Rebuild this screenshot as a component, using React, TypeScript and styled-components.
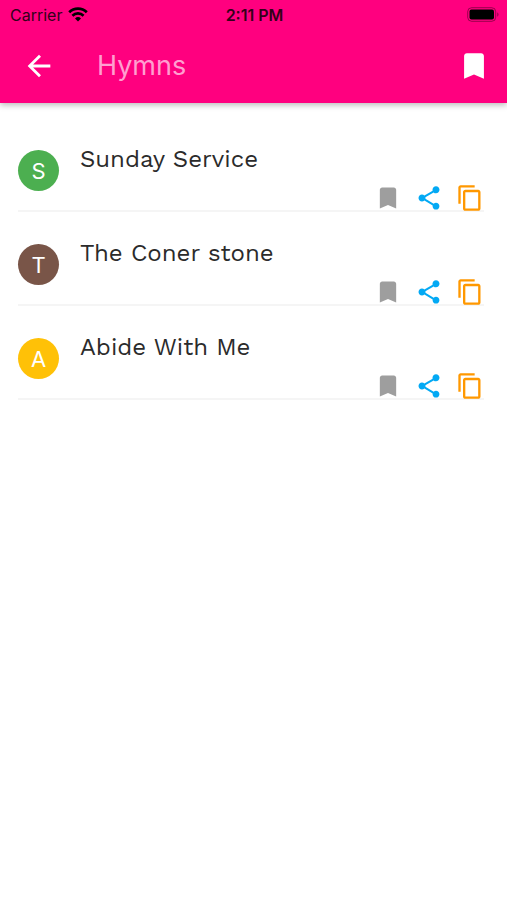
import React from "react";
import styled, { createGlobalStyle } from "styled-components";
import { MdArrowBack, MdBookmark, MdContentCopy, MdShare } from "react-icons/md";

const GlobalStyle = createGlobalStyle`
  *, *::before, *::after { box-sizing: border-box; }
  body {
    margin: 0;
    background: #ffffff;
    font-family: Inter, "Liberation Sans", sans-serif;
  }
`;

const Screen = styled.div`
  min-height: 100vh;
  background: #ffffff;
`;

const Header = styled.header`
  background: #ff007f;
  box-shadow: 0 2px 6px rgba(0, 0, 0, 0.28);
`;

const StatusBar = styled.div`
  display: grid;
  grid-template-columns: 1fr auto 1fr;
  align-items: center;
  height: 29px;
  padding: 0 8px 0 10px;
  color: #330019;
  font-size: 16px;
  line-height: 20px;
`;

const Carrier = styled.div`
  display: flex;
  align-items: center;
  gap: 6px;
`;

const Time = styled.time`
  font-weight: 600;
`;

const BatterySvg = styled.svg`
  justify-self: end;
`;

const AppBar = styled.div`
  display: flex;
  align-items: center;
  height: 74px;
  padding: 0 16px 0 22px;
`;

const IconButton = styled.button<{ $color: string; $size: number }>`
  display: flex;
  flex: none;
  padding: 0;
  border: 0;
  background: none;
  color: ${(p) => p.$color};
  font-size: ${(p) => p.$size}px;
  cursor: pointer;
`;

const Title = styled.h1`
  flex: 1;
  margin: 0 0 0 41px;
  color: #ff9fd0;
  font-size: 27px;
  font-weight: 400;
  line-height: 32px;
`;

const List = styled.ul`
  margin: 0;
  padding: 15px 23px 0 18px;
  list-style: none;
`;

const Row = styled.li`
  display: flex;
  height: 94px;
  border-bottom: 2px solid #f5f5f5;
`;

const Avatar = styled.div<{ $color: string }>`
  display: flex;
  flex: none;
  align-items: center;
  justify-content: center;
  width: 41px;
  height: 41px;
  margin-top: 32px;
  border-radius: 50%;
  background: ${(p) => p.$color};
  color: #ffffff;
  font-size: 22px;
  line-height: 28px;
`;

const Body = styled.div`
  display: flex;
  flex: 1;
  flex-direction: column;
  justify-content: space-between;
  margin-left: 21px;
  padding-top: 25px;
`;

const HymnName = styled.h2`
  margin: 0;
  color: #2b2b2b;
  font-family: "Work Sans", Inter, sans-serif;
  font-size: 24px;
  font-weight: 400;
  line-height: 32px;
`;

const Actions = styled.div`
  display: flex;
  align-self: flex-end;
  gap: 13px;
  margin-bottom: -2px;
`;

const hymns = [
  { name: "Sunday Service", color: "#4caf50" },
  { name: "The Coner stone", color: "#795548" },
  { name: "Abide With Me", color: "#ffc107" },
];

const Wifi = () => (
  <svg width="20" height="15" viewBox="0 0 20 15" fill="none" aria-hidden="true">
    <path d="M1.2 5.3a12.6 12.6 0 0 1 17.6 0" stroke="#000" strokeWidth="2.7" />
    <path d="M4.4 8.7a8 8 0 0 1 11.2 0" stroke="#000" strokeWidth="2.6" />
    <path d="M7 11.5a4.3 4.3 0 0 1 6 0L10 14.6z" fill="#000" />
  </svg>
);

const Battery = () => (
  <BatterySvg width="32" height="15" viewBox="0 0 32 15" fill="none" role="img" aria-label="Battery full">
    <rect x="0.7" y="0.7" width="28" height="13.6" rx="4" stroke="#000" strokeOpacity="0.4" />
    <rect x="2.5" y="2.5" width="24.5" height="10" rx="2" fill="#000" />
    <path d="M30.3 5.3c1.6.7 1.6 3.7 0 4.4z" fill="#000" fillOpacity="0.45" />
  </BatterySvg>
);

export default function App() {
  return (
    <Screen>
      <GlobalStyle />
      <Header>
        <StatusBar>
          <Carrier>
            Carrier
            <Wifi />
          </Carrier>
          <Time>2:11 PM</Time>
          <Battery />
        </StatusBar>
        <AppBar>
          <IconButton type="button" aria-label="Back" $color="#ffffff" $size={34}>
            <MdArrowBack />
          </IconButton>
          <Title>Hymns</Title>
          <IconButton type="button" aria-label="Bookmarks" $color="#ffffff" $size={34}>
            <MdBookmark />
          </IconButton>
        </AppBar>
      </Header>
      <List>
        {hymns.map(({ name, color }) => (
          <Row key={name}>
            <Avatar $color={color}>{name[0]}</Avatar>
            <Body>
              <HymnName>{name}</HymnName>
              <Actions>
                <IconButton type="button" aria-label={`Bookmark ${name}`} $color="#9e9e9e" $size={28}>
                  <MdBookmark />
                </IconButton>
                <IconButton type="button" aria-label={`Share ${name}`} $color="#03a9f4" $size={28}>
                  <MdShare />
                </IconButton>
                <IconButton type="button" aria-label={`Copy ${name}`} $color="#ff9800" $size={28}>
                  <MdContentCopy />
                </IconButton>
              </Actions>
            </Body>
          </Row>
        ))}
      </List>
    </Screen>
  );
}
